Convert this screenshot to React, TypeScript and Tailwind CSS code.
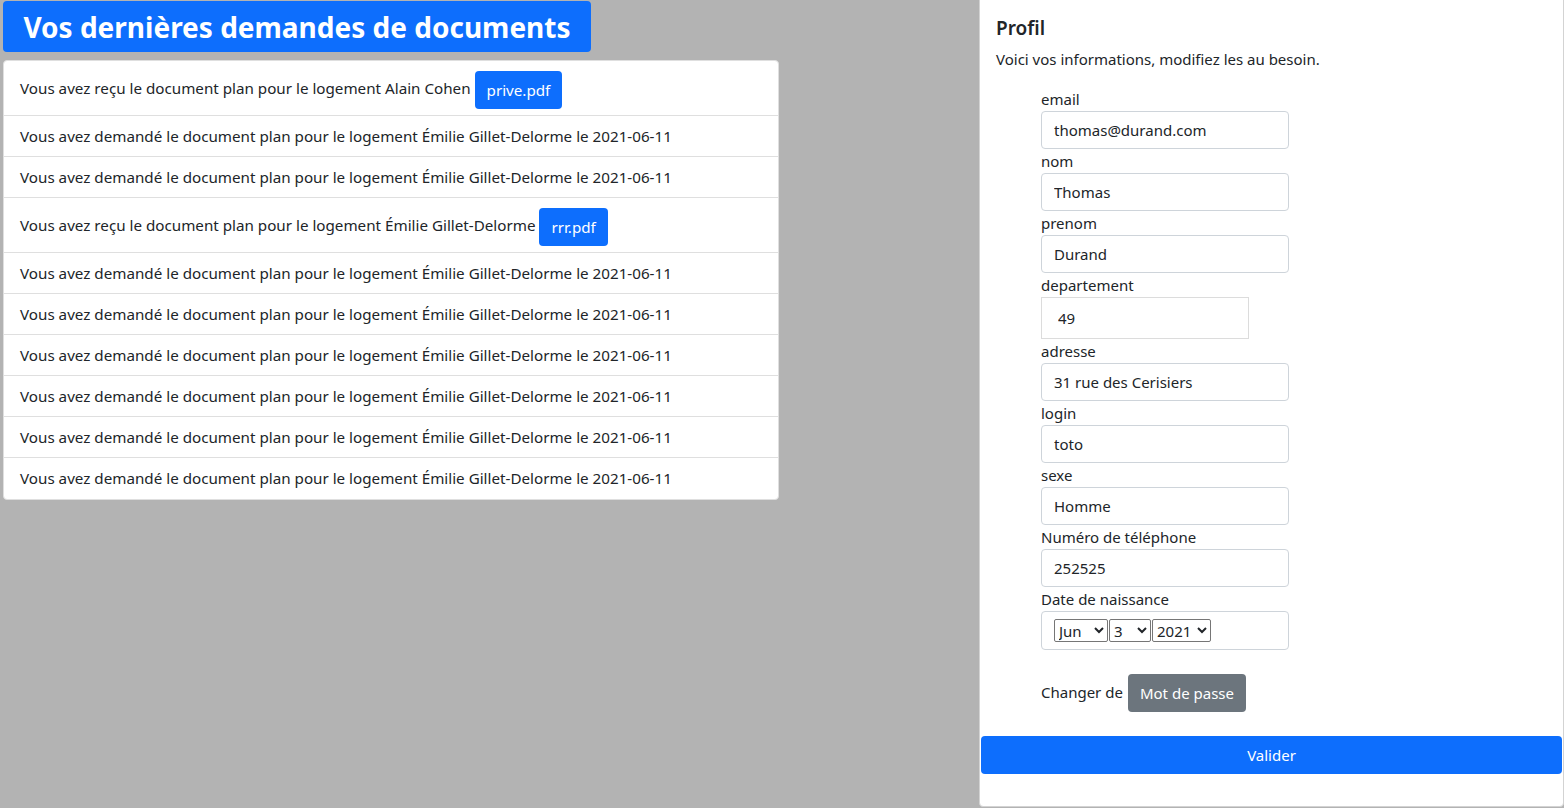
import React from 'react';

type Demande = {
  kind: 'recu' | 'demande';
  logement: string;
  file?: string;
  date?: string;
};

const demandes: Demande[] = [
  { kind: 'recu', logement: 'Alain Cohen', file: 'prive.pdf' },
  { kind: 'demande', logement: 'Émilie Gillet-Delorme', date: '2021-06-11' },
  { kind: 'demande', logement: 'Émilie Gillet-Delorme', date: '2021-06-11' },
  { kind: 'recu', logement: 'Émilie Gillet-Delorme', file: 'rrr.pdf' },
  { kind: 'demande', logement: 'Émilie Gillet-Delorme', date: '2021-06-11' },
  { kind: 'demande', logement: 'Émilie Gillet-Delorme', date: '2021-06-11' },
  { kind: 'demande', logement: 'Émilie Gillet-Delorme', date: '2021-06-11' },
  { kind: 'demande', logement: 'Émilie Gillet-Delorme', date: '2021-06-11' },
  { kind: 'demande', logement: 'Émilie Gillet-Delorme', date: '2021-06-11' },
  { kind: 'demande', logement: 'Émilie Gillet-Delorme', date: '2021-06-11' },
];

const fields = [
  { label: 'email', value: 'thomas@durand.com' },
  { label: 'nom', value: 'Thomas' },
  { label: 'prenom', value: 'Durand' },
];

const fields2 = [
  { label: 'adresse', value: '31 rue des Cerisiers' },
  { label: 'login', value: 'toto' },
  { label: 'sexe', value: 'Homme' },
  { label: 'Numéro de téléphone', value: '252525' },
];

function Field({ label, value }: { label: string; value: string }) {
  return (
    <div className="flex flex-col">
      <label className="leading-6">{label}</label>
      <input
        readOnly
        value={value}
        className="w-[248px] h-[38px] px-3 border border-[#ced4da] rounded-[4px] bg-white text-[#212529] outline-none"
      />
    </div>
  );
}

export default function App() {
  return (
    <div
      className="flex w-full h-[808px] bg-[#b3b3b3] text-[#212529] text-[15px] overflow-hidden"
      style={{ fontFamily: '"Noto Sans", "Open Sans", sans-serif' }}
    >
      {/* Left column: latest document requests */}
      <div className="w-[979px] shrink-0 pl-[3px] pt-px">
        <div className="w-[588px] h-[51px] flex items-center justify-center bg-[#0d6efd] rounded-[4px] text-white font-bold text-[28px]">
          Vos dernières demandes de documents
        </div>
        <ul className="mt-2 w-[776px] bg-white border border-[#dfdfdf] rounded-[4px] text-[15.2px]">
          {demandes.map((d, i) => (
            <li
              key={i}
              className={
                'flex items-center px-4 ' +
                (d.file ? 'h-[55px] ' : 'h-[41px] ') +
                (i < demandes.length - 1 ? 'border-b border-[#dfdfdf]' : '')
              }
            >
              {d.kind === 'recu' ? (
                <>
                  <span>Vous avez reçu le document plan pour le logement {d.logement}</span>
                  <button className="ml-[4px] mt-[4px] h-[38px] px-3 bg-[#0d6efd] text-white rounded-[4px]">
                    {d.file}
                  </button>
                </>
              ) : (
                <span>
                  Vous avez demandé le document plan pour le logement {d.logement} le {d.date}
                </span>
              )}
            </li>
          ))}
        </ul>
      </div>

      {/* Right column: profile card */}
      <div className="flex-1 flex flex-col bg-white border border-[#d3d3d3] rounded-b-[4px] h-[808px] -mt-px pt-px">
        <div className="px-4 pt-[15px]">
          <h5 className="text-[19px] font-semibold leading-6">Profil</h5>
          <p className="mt-[7px] leading-6">Voici vos informations, modifiez les au besoin.</p>
        </div>
        <form className="pl-[61px] mt-[16px] flex flex-col">
          {fields.map((f) => (
            <Field key={f.label} {...f} />
          ))}
          <div className="flex flex-col">
            <label className="leading-6">departement</label>
            <input
              readOnly
              value="49"
              className="w-[208px] h-[42px] px-4 border border-[#dcdcdc] bg-white outline-none"
            />
          </div>
          {fields2.map((f) => (
            <Field key={f.label} {...f} />
          ))}
          <div className="flex flex-col">
            <label className="leading-6">Date de naissance</label>
            <div className="w-[248px] h-[39px] px-3 border border-[#ced4da] rounded-[4px] flex items-center gap-px">
              <select className="w-[54px] h-[23px] border border-[#767676] rounded-[2px] text-[15px] bg-white">
                <option>Jun</option>
              </select>
              <select className="w-[42px] h-[23px] border border-[#767676] rounded-[2px] text-[15px] bg-white">
                <option>3</option>
              </select>
              <select className="w-[59px] h-[23px] border border-[#767676] rounded-[2px] text-[15px] bg-white">
                <option>2021</option>
              </select>
            </div>
          </div>
          <div className="mt-[22px] flex items-center">
            <span>Changer de</span>
            <button
              type="button"
              className="ml-[5px] mt-[2px] h-[38px] px-3 bg-[#6c757d] text-white rounded-[4px]"
            >
              Mot de passe
            </button>
          </div>
        </form>
        <button className="mt-6 mx-px h-[38px] bg-[#0d6efd] text-white rounded-[4px]">Valider</button>
      </div>
    </div>
  );
}
